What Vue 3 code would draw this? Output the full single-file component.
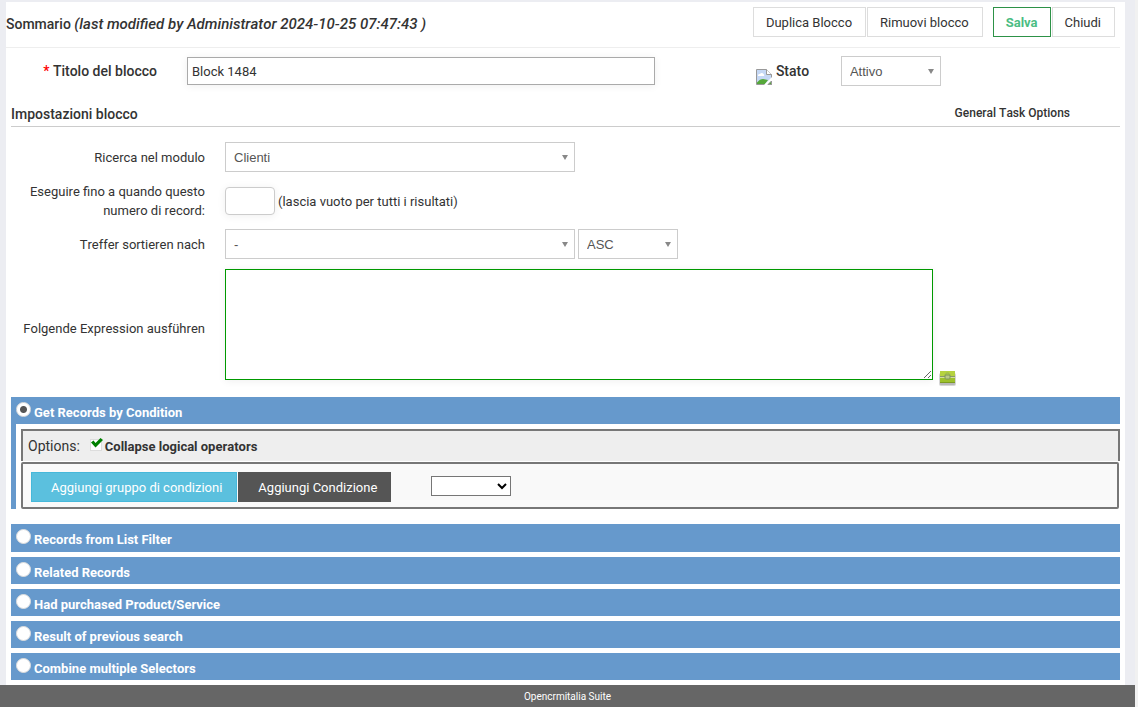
<script setup>
import { ref } from 'vue'

const title = ref('Block 1484')
const status = ref('Attivo')
const moduleName = ref('Clienti')
const limit = ref('')
const sortField = ref('-')
const sortOrder = ref('ASC')
const expression = ref('')
const collapse = ref(true)
const group = ref('')
const selector = ref('condition')
const others = [
  { id: 'filter', label: 'Records from List Filter' },
  { id: 'related', label: 'Related Records' },
  { id: 'purchased', label: 'Had purchased Product/Service' },
  { id: 'previous', label: 'Result of previous search' },
  { id: 'combine', label: 'Combine multiple Selectors' },
]
</script>

<template>
  <div class="page">
    <main class="sheet">
      <header class="top">
        <h1>Sommario <em>(last modified by Administrator 2024-10-25 07:47:43 )</em></h1>
        <div class="actions">
          <button type="button">Duplica Blocco</button>
          <button type="button">Rimuovi blocco</button>
          <button type="button" class="save">Salva</button>
          <button type="button">Chiudi</button>
        </div>
      </header>

      <div class="title-row">
        <label for="title" class="title-label"><span class="req">*</span> Titolo del blocco</label>
        <div class="title-field"><input id="title" v-model="title" type="text" class="text"></div>
        <div class="status">
          <svg class="broken" width="16" height="16" viewBox="0 0 16 16" aria-hidden="true">
            <path d="M.5.5h10l5 5v10H.5z" fill="#c5d8f5" />
            <path d="M2 6.500a1.500 1.500 0 0 1 2-1.500 2 2 0 0 1 3.500 0A1.500 1.500 0 0 1 8 7H2z" fill="#fff" />
            <path d="M1 15v-1.500C3 11 5 10 7 10s3 1 5 1L9 15z" fill="#56a83a" />
            <path d="M.5.5h10l5 5v10H.5z" fill="none" stroke="#999" />
            <path d="M10.500.5v5h5" fill="#fff" stroke="#999" />
            <path d="M8 16l8-8v3.500L11.500 16z" fill="#fff" />
            <path d="M12 15.500h3.500v-3.500z" fill="#56a83a" stroke="#999" />
          </svg>
          <label for="status">Stato</label>
        </div>
        <div class="pick small">
          <select id="status" v-model="status"><option>Attivo</option></select>
          <svg width="6" height="6" viewBox="0 0 6 6" aria-hidden="true"><path d="M0 0h6L3 5z" /></svg>
        </div>
      </div>

      <div class="section">
        <div class="section-head">
          <h2>Impostazioni blocco</h2>
          <h3>General Task Options</h3>
        </div>

        <div class="form">
          <label for="module">Ricerca nel modulo</label>
          <div class="field">
            <div class="pick">
              <select id="module" v-model="moduleName"><option>Clienti</option></select>
              <svg width="6" height="6" viewBox="0 0 6 6" aria-hidden="true"><path d="M0 0h6L3 5z" /></svg>
            </div>
          </div>
          <label for="limit">Eseguire fino a quando questo numero di record:</label>
          <div class="field">
            <input id="limit" v-model="limit" type="text" class="text limit">
            <span class="hint">(lascia vuoto per tutti i risultati)</span>
          </div>
          <label for="sort">Treffer sortieren nach</label>
          <div class="field">
            <div class="pick">
              <select id="sort" v-model="sortField"><option>-</option></select>
              <svg width="6" height="6" viewBox="0 0 6 6" aria-hidden="true"><path d="M0 0h6L3 5z" /></svg>
            </div>
            <div class="pick small">
              <select v-model="sortOrder" aria-label="ASC"><option>ASC</option><option>DESC</option></select>
              <svg width="6" height="6" viewBox="0 0 6 6" aria-hidden="true"><path d="M0 0h6L3 5z" /></svg>
            </div>
          </div>
          <label for="expression">Folgende Expression ausführen</label>
          <div class="field area">
            <textarea id="expression" v-model="expression"></textarea>
            <svg class="tool" width="18" height="18" viewBox="0 0 18 18" aria-hidden="true">
              <rect x="0" y="4" width="17" height="13" rx="2" fill="#999" opacity=".4" />
              <rect x="1" y="3" width="15" height="13" rx="1" fill="#999" opacity=".5" />
              <rect x="1" y="2" width="15" height="12" rx="1" fill="#9dc12b" />
              <path d="M1 3a1 1 0 0 1 1-1h13a1 1 0 0 1 1 1v4H1z" fill="#b5d23f" />
              <path d="M1 7.500h15" stroke="#8a9a6a" />
              <path d="M1 8.500h15" stroke="#d3df9d" />
              <path d="M6 7c0-4 5-4 5 0" fill="none" stroke="#8fae5a" />
              <rect x="6" y="6" width="5" height="4" rx="1" fill="#b9c987" stroke="#7f9658" />
              <path d="M1 13.500h15" stroke="#7d9c22" />
            </svg>
          </div>
        </div>

        <section class="active">
          <label class="bar"><input v-model="selector" type="radio" name="selector" value="condition"><span>Get Records by Condition</span></label>
          <div class="body">
            <div class="options">
              <span>Options:</span>
              <label class="check">
                <input v-model="collapse" type="checkbox">
                <svg width="12" height="10" viewBox="0 0 12 10" aria-hidden="true"><path d="M0 4.500L2.500 2.500 4.500 5 9.500 0 12 2 4.500 9.500z" fill="#008000" /></svg>
                <b>Collapse logical operators</b>
              </label>
            </div>
            <div class="conditions">
              <button type="button" class="add-group">Aggiungi gruppo di condizioni</button>
              <button type="button" class="add-one">Aggiungi Condizione</button>
              <select v-model="group" class="native" aria-label="Condizione"><option value=""></option></select>
            </div>
          </div>
        </section>

        <div class="bars">
          <label v-for="item in others" :key="item.id" class="bar">
            <input v-model="selector" type="radio" name="selector" :value="item.id"><span>{{ item.label }}</span>
          </label>
        </div>
      </div>
    </main>
    <footer>Opencrmitalia Suite</footer>
  </div>
</template>

<style>
body { margin: 0; background: #f1f1f1; }
</style>

<style scoped>
.page { margin-right: 3px; padding-top: 2px; background: #ecedf2; color: #333; font: 13px/19px Roboto, sans-serif; }
.page, .page * { box-sizing: border-box; font-kerning: none; }
h1, h2, h3 { margin: 0; font-size: 14px; line-height: 20px; font-weight: 500; }
h1 em { font-size: 15px; }
.sheet { margin: 0 10px 0 6px; padding: 0 5px 5px 0; background: #fff; }
.top { display: flex; align-items: center; justify-content: space-between; height: 46px; padding: 0 5px 4px 0; border-bottom: 1px solid #eee; }
h1 { padding-top: 2px; }
.actions { display: flex; gap: 1px; margin-top: -2px; }
.actions button { height: 30px; padding: 2px 13px 0 12px; border: 1px solid #ddd; background: #fff; color: #333; font: 13px/19px Roboto, sans-serif; }
.actions .save { margin-left: 9px; padding-right: 12px; border-color: #2d9247; color: #4bbd83; font-weight: 700; }
.title-row { display: flex; align-items: center; height: 46px; font-size: 14px; font-weight: 500; }
.title-label { width: 151px; text-align: right; }
.req { color: red; }
.title-field { flex: 0 0 42%; margin-left: 30px; margin-right: 101px; }
.text { display: block; width: 100%; height: 28px; padding: 0 4px; border: 1px solid #aaa; box-shadow: 0 1px 8px #0001; background: #fff; color: #333; font: 13px/19px Roboto, sans-serif; }
.status { display: flex; width: 85px; gap: 4px; padding-top: 4px; }
.broken { margin-top: 7px; }
.pick { position: relative; width: 350px; height: 30px; }
.pick.small { width: 100px; }
.pick select { appearance: none; display: block; width: 100%; height: 100%; padding: 0 8px; border: 1px solid #ccc; border-radius: 0; background: #fff; color: #555; font: 13px/19px "Liberation Sans", sans-serif; }
.pick svg { position: absolute; right: 7px; top: 13px; fill: #888; pointer-events: none; }
.section { margin-left: 5px; }
.section-head { display: flex; align-items: center; justify-content: space-between; height: 33px; padding: 8px 50px 0 0; border-bottom: 1px solid #ccc; }
h3 { font-size: 12px; line-height: 22px; margin-top: -2px; }
.form { display: grid; grid-template-columns: 194px 1fr; column-gap: 20px; row-gap: 10px; align-items: center; padding: 15px 0 12px; }
.form > label { text-align: right; padding-left: 10px; margin: -2px 0; }
.form > label:last-of-type { padding-top: 2px; }
.field { display: flex; align-items: center; gap: 3px; }
.hint { padding-top: 2px; }
.limit { width: 50px; border-color: #ccc; border-radius: 4px; margin: 5px 0 4px; }
.form .area { align-items: flex-end; gap: 6px; }
textarea { display: block; width: 708px; height: 111px; border: 1px solid #090; margin: 0 0 5px; background: #fff; box-shadow: 0 1px 8px #0001; font: 13px/19px Roboto, sans-serif; }
.tool { margin-bottom: -2px; }
.bar { display: flex; align-items: flex-start; gap: 3px; height: 27px; padding: 4px 5px 0; background: #6699cc; color: #fff; font-weight: 700; line-height: 24px; }
.bar input { appearance: none; width: 15px; height: 15px; margin: 1px 0 0; border: 1px solid #ddd; border-radius: 50%; background: #fff; }
.bar input:checked { background: radial-gradient(circle, #555 0 3px, #fff 4px); }
.active { border-left: 5px solid #6699cc; }
.active .bar { padding-left: 0; }
.body { padding: 5px 0 0 5px; }
.options { display: flex; align-items: center; height: 32px; padding: 0 0 0 5px; border: 2px solid #777; border-bottom: 0; background: #eee; font-size: 14px; }
.check { position: relative; display: flex; align-items: center; gap: 3px; margin-left: 10px; font-size: 13px; }
.check input { appearance: none; width: 12px; height: 12px; margin: -3px 0 0; border: 1px solid #ddd; background: #fff; }
.check svg { position: absolute; left: 1px; top: 1px; }
.conditions { display: flex; align-items: center; height: 47px; margin: 1px 1px 0 0; padding: 2px 8px 0; border: 2px solid #777; border-radius: 2px; background: #f9f9f9; }
.conditions button { height: 30px; padding: 1px 14px 0 19px; border: 1px solid #46b8da; background: #5bc0de; color: #fff; font: 13px/19px Roboto, sans-serif; }
.conditions .add-one { padding-right: 13px; border-color: #555; background: #555; margin-left: 1px; }
.native { width: 80px; height: 20px; margin: -2px 0 0 40px; background: #fff; }
.bars { display: grid; gap: 5px; margin-top: 15px; }
.bars .bar:first-child { height: 28px; }
footer { height: 22px; padding-top: 1px; background: #666; color: #fff; font-size: 10px; line-height: 21px; text-align: center; }
</style>
